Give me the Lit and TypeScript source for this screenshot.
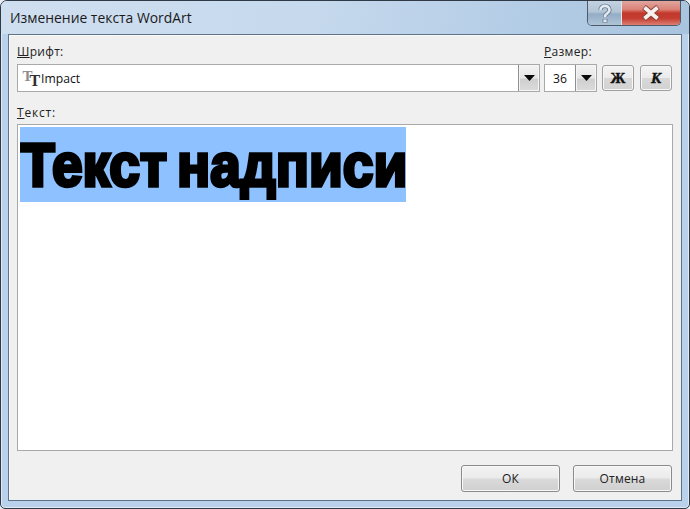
import { LitElement, html, css, svg } from "lit";
import { customElement } from "lit/decorators.js";

const arrow = html`<svg class="tri" width="11" height="6" viewBox="0 0 11 6"><path d="M0 0H11L5.5 6Z" fill="#0a0a0a"/></svg>`;

@customElement("app-root")
export class AppRoot extends LitElement {
  static styles = css`
    :host { display: block; width: 690px; height: 509px; background: #e8eef4; font-family: "Open Sans", "Noto Sans", sans-serif; color: #222; overflow: hidden; }
    * { box-sizing: border-box; }
    .win { width: 690px; height: 509px; border: 1px solid #2f3a46; border-radius: 7px 7px 5px 5px; display: flex; flex-direction: column;
      padding: 0 7px 7px 7px;
      background: #b9d1ea;
      box-shadow: inset 0 0 0 1px #dfeaf5; }
    .title { height: 33px; flex: none; display: flex; justify-content: space-between; align-items: flex-start; margin: 0 -7px; padding: 0 8px 0 9px;
      background: linear-gradient(100deg, #cfdff0 0%, #c6d9ed 45%, #b4cde6 75%, #a9c4df 100%); border-radius: 6px 6px 0 0; }
    .title-text { font-size: 13.9px; line-height: 34px; color: #1a1a1a; }
    .caps { display: flex; height: 25px; border: 1px solid #4d5a68; border-top: none; border-radius: 0 0 5px 5px; overflow: hidden; }
    .cap { display: flex; align-items: center; justify-content: center; }
    .help { width: 34px; background: linear-gradient(180deg, #c3d2e0 0%, #b2c4d6 45%, #94adc5 55%, #aec4d8 100%); border-right: 1px solid #dfe7ee; }
    .close { width: 58px; background: linear-gradient(180deg, #e0a69f 0%, #db8277 35%, #c2392c 50%, #c43d30 72%, #dd7f72 100%); }
    .client { flex: 1; display: flex; flex-direction: column; background: #f0f0f0; border: 1px solid #5e7288; padding: 9px 8px 8px 8px; box-shadow: inset 1px 1px 0 #fafafa; }
    .top { display: flex; gap: 4px; }
    .col { display: flex; flex-direction: column; gap: 4px; }
    .col.font { flex: 1; }
    .col.size { width: 53px; }
    label { font-size: 12px; line-height: 16px; height: 16px; color: #222; white-space: nowrap; letter-spacing: 0.3px; }
    .combo { height: 28px; display: flex; align-items: stretch; background: #fff; border: 1px solid #a9a9a9; }
    .combo .val { flex: 1; display: flex; align-items: center; font-size: 12.2px; color: #111; min-width: 0; }
    .font .val { padding-left: 4px; gap: 0; }
    .font .val svg { overflow: visible; }
    .size .val { justify-content: center; }
    .drop { width: 21px; flex: none; display: flex; align-items: center; justify-content: center; border-left: 1px solid #8f8f8f;
      background: linear-gradient(180deg, #f3f3f3 0%, #e6e6e6 50%, #cfcfcf 55%, #dcdcdc 100%); box-shadow: inset 0 0 0 1px #f5f5f5; }
    .fmt { display: flex; gap: 6px; align-self: flex-end; margin: 0 1px 1px 1px; }
    .fbtn { width: 32px; height: 26px; border: 1px solid #a0a0a0; border-radius: 3px; display: flex; align-items: center; justify-content: center;
      background: linear-gradient(180deg, #f4f4f4 0%, #ebebeb 48%, #d8d8d8 52%, #d2d2d2 100%); font-family: "Liberation Serif", serif; font-weight: bold; font-size: 15px; color: #111; -webkit-text-stroke: 0.4px #111; box-shadow: inset 0 0 0 1px #f7f7f7; }
    .fbtn.i { font-style: italic; }
    .tlabel { margin-top: 13px; margin-bottom: 3px; letter-spacing: 0.8px; }
    .area { flex: 1; background: #fff; border: 1px solid #a9a9a9; padding: 2px; min-height: 0; }
    .sel { width: 386px; height: 75px; background: #8ec1ff; overflow: hidden; }
    .big { display: inline-block; transform: scaleX(0.888); transform-origin: 0 50%; font-family: "Liberation Sans", sans-serif; font-weight: bold; font-size: 62px; line-height: 75px; color: #000; -webkit-text-stroke: 3.6px #000; white-space: nowrap; word-spacing: -6px; letter-spacing: 0; margin-left: 1px; }
    .bottom { display: flex; justify-content: flex-end; gap: 13px; margin-top: 14px; padding-right: 1px; }
    .btn { width: 99px; height: 27px; border: 1px solid #8a8a8a; border-radius: 3px; display: flex; align-items: center; justify-content: center; font-size: 12px; color: #222;
      background: linear-gradient(180deg, #f3f3f3 0%, #ebebeb 48%, #dadada 52%, #cfcfcf 100%); box-shadow: inset 0 0 0 1px #f8f8f8; letter-spacing: 0.2px; }
  `;

  render() {
    return html`<div class="win">
      <div class="title">
        <span class="title-text">Изменение текста WordArt</span>
        <div class="caps">
          <div class="cap help"><svg width="18" height="22" viewBox="0 0 18 22" fill="none">
            ${svg`<path d="M4.5 8C4.5 2.5 13.5 2.5 13.5 8C13.5 11.5 9 11 9 15" stroke="#6c7e90" stroke-width="4.4"/><path d="M9 17V20.5" stroke="#6c7e90" stroke-width="5"/>
            <path d="M4.5 8C4.5 2.5 13.5 2.5 13.5 8C13.5 11.5 9 11 9 15" stroke="#e3eaf1" stroke-width="2.6"/><path d="M9 17.5V20" stroke="#e3eaf1" stroke-width="3.2"/>`}
          </svg></div>
          <div class="cap close"><svg width="22" height="16" viewBox="0 0 22 16" fill="none">
            ${svg`<path d="M4 2L18 14M18 2L4 14" stroke="#8a403a" stroke-width="5.6"/><path d="M4.5 2.5L17.5 13.5M17.5 2.5L4.5 13.5" stroke="#f6f1ef" stroke-width="3.8"/>`}
          </svg></div>
        </div>
      </div>
      <div class="client">
        <div class="top">
          <div class="col font">
            <label><u>Ш</u>рифт:</label>
            <div class="combo">
              <div class="val">
                <svg width="19" height="17" viewBox="0 0 18 17">
                  ${svg`<text x="0" y="11" font-family="Liberation Serif" font-weight="bold" font-size="15" fill="#8c8c8c">T</text><text x="7" y="16" font-family="Liberation Serif" font-weight="bold" font-size="16" fill="#2e2e2e">T</text>`}
                </svg>
                <span>Impact</span>
              </div>
              <div class="drop">${arrow}</div>
            </div>
          </div>
          <div class="col size">
            <label><u>Р</u>азмер:</label>
            <div class="combo">
              <div class="val">36</div>
              <div class="drop">${arrow}</div>
            </div>
          </div>
          <div class="fmt">
            <div class="fbtn">Ж</div>
            <div class="fbtn i">К</div>
          </div>
        </div>
        <label class="tlabel"><u>Т</u>екст:</label>
        <div class="area"><div class="sel"><span class="big">Текст надписи</span></div></div>
        <div class="bottom">
          <div class="btn">ОК</div>
          <div class="btn">Отмена</div>
        </div>
      </div>
    </div>`;
  }
}
